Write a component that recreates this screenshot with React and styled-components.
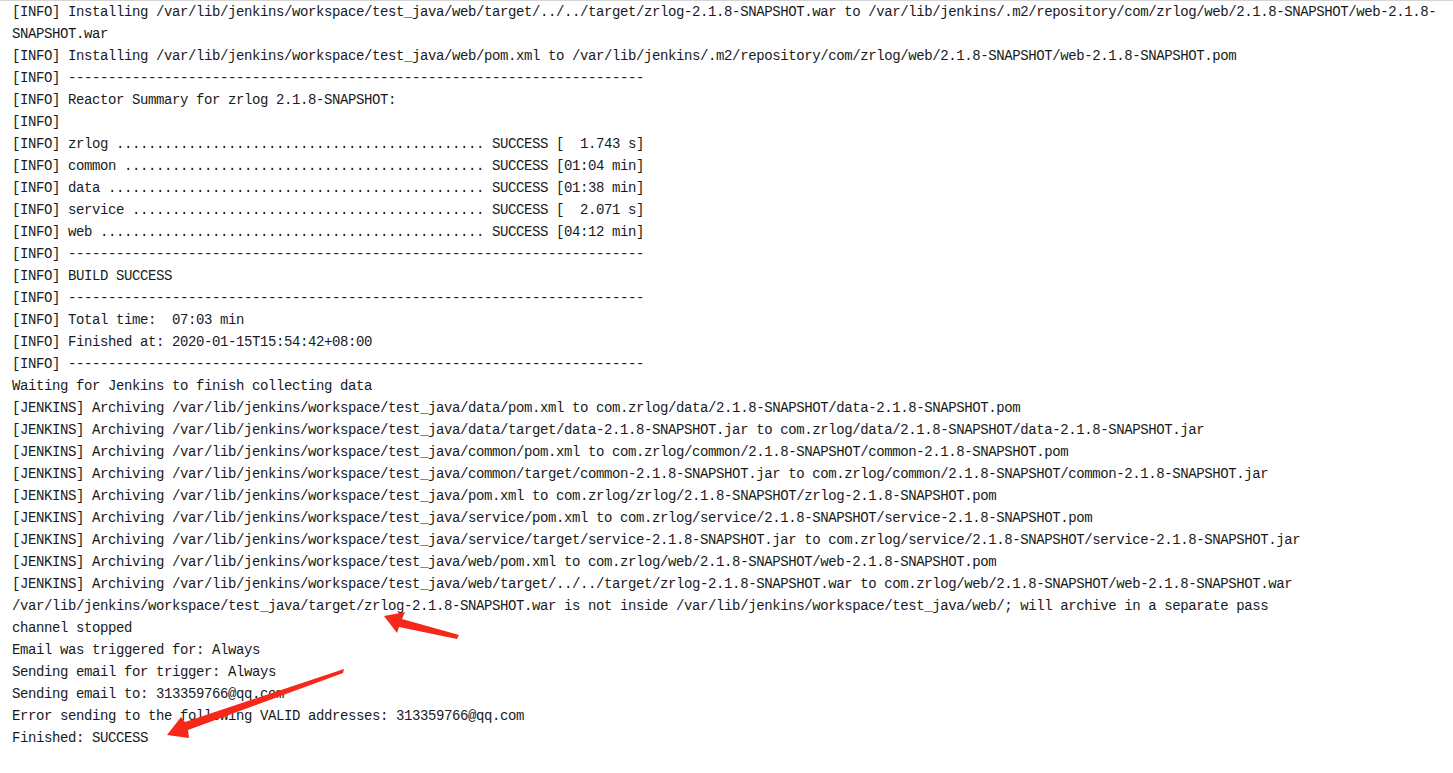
import React from 'react'
import styled, { createGlobalStyle } from 'styled-components'

const GlobalStyle = createGlobalStyle`
  html, body {
    margin: 0;
    padding: 0;
    background: #ffffff;
  }
`;

const Page = styled.div`
  position: relative;
  width: 1453px;
  height: 773px;
  overflow: hidden;
  background: #ffffff;
  border-top: 1px solid #d4d4d4;
  box-sizing: border-box;
`;

const Console = styled.pre`
  margin: 0;
  padding: 0 0 0 12px;
  font-family: "Liberation Mono", "DejaVu Sans Mono", monospace;
  font-size: 14px;
  letter-spacing: -0.4px;
  line-height: 22px;
  color: #1a1a1a;
  white-space: pre;
`;

const Line = styled.div`
  height: 22px;
`;

const Annotations = styled.svg`
  position: absolute;
  left: 0;
  top: 0;
  pointer-events: none;
`;

const dashes = '-'.repeat(72);
const dots = (n) => '.'.repeat(n);

const lines = [
  '[INFO] Installing /var/lib/jenkins/workspace/test_java/web/target/../../target/zrlog-2.1.8-SNAPSHOT.war to /var/lib/jenkins/.m2/repository/com/zrlog/web/2.1.8-SNAPSHOT/web-2.1.8-',
  'SNAPSHOT.war',
  '[INFO] Installing /var/lib/jenkins/workspace/test_java/web/pom.xml to /var/lib/jenkins/.m2/repository/com/zrlog/web/2.1.8-SNAPSHOT/web-2.1.8-SNAPSHOT.pom',
  `[INFO] ${dashes}`,
  '[INFO] Reactor Summary for zrlog 2.1.8-SNAPSHOT:',
  '[INFO]',
  `[INFO] zrlog ${dots(46)} SUCCESS [  1.743 s]`,
  `[INFO] common ${dots(45)} SUCCESS [01:04 min]`,
  `[INFO] data ${dots(47)} SUCCESS [01:38 min]`,
  `[INFO] service ${dots(44)} SUCCESS [  2.071 s]`,
  `[INFO] web ${dots(48)} SUCCESS [04:12 min]`,
  `[INFO] ${dashes}`,
  '[INFO] BUILD SUCCESS',
  `[INFO] ${dashes}`,
  '[INFO] Total time:  07:03 min',
  '[INFO] Finished at: 2020-01-15T15:54:42+08:00',
  `[INFO] ${dashes}`,
  'Waiting for Jenkins to finish collecting data',
  '[JENKINS] Archiving /var/lib/jenkins/workspace/test_java/data/pom.xml to com.zrlog/data/2.1.8-SNAPSHOT/data-2.1.8-SNAPSHOT.pom',
  '[JENKINS] Archiving /var/lib/jenkins/workspace/test_java/data/target/data-2.1.8-SNAPSHOT.jar to com.zrlog/data/2.1.8-SNAPSHOT/data-2.1.8-SNAPSHOT.jar',
  '[JENKINS] Archiving /var/lib/jenkins/workspace/test_java/common/pom.xml to com.zrlog/common/2.1.8-SNAPSHOT/common-2.1.8-SNAPSHOT.pom',
  '[JENKINS] Archiving /var/lib/jenkins/workspace/test_java/common/target/common-2.1.8-SNAPSHOT.jar to com.zrlog/common/2.1.8-SNAPSHOT/common-2.1.8-SNAPSHOT.jar',
  '[JENKINS] Archiving /var/lib/jenkins/workspace/test_java/pom.xml to com.zrlog/zrlog/2.1.8-SNAPSHOT/zrlog-2.1.8-SNAPSHOT.pom',
  '[JENKINS] Archiving /var/lib/jenkins/workspace/test_java/service/pom.xml to com.zrlog/service/2.1.8-SNAPSHOT/service-2.1.8-SNAPSHOT.pom',
  '[JENKINS] Archiving /var/lib/jenkins/workspace/test_java/service/target/service-2.1.8-SNAPSHOT.jar to com.zrlog/service/2.1.8-SNAPSHOT/service-2.1.8-SNAPSHOT.jar',
  '[JENKINS] Archiving /var/lib/jenkins/workspace/test_java/web/pom.xml to com.zrlog/web/2.1.8-SNAPSHOT/web-2.1.8-SNAPSHOT.pom',
  '[JENKINS] Archiving /var/lib/jenkins/workspace/test_java/web/target/../../target/zrlog-2.1.8-SNAPSHOT.war to com.zrlog/web/2.1.8-SNAPSHOT/web-2.1.8-SNAPSHOT.war',
  '/var/lib/jenkins/workspace/test_java/target/zrlog-2.1.8-SNAPSHOT.war is not inside /var/lib/jenkins/workspace/test_java/web/; will archive in a separate pass',
  'channel stopped',
  'Email was triggered for: Always',
  'Sending email for trigger: Always',
  'Sending email to: 313359766@qq.com',
  'Error sending to the following VALID addresses: 313359766@qq.com',
  'Finished: SUCCESS',
];

export default function App() {
  return (
    <Page>
      <GlobalStyle />
      <Console>
        {lines.map((text, i) => (
          <Line key={i}>{text}</Line>
        ))}
      </Console>
      <Annotations width="1453" height="773" viewBox="0 0 1453 773">
        {/* arrow pointing at zrlog-2.1.8 */}
        <polygon
          fill="#f5281a"
          points="384,615 405,611 402,618 459,634 457,638 399,626 397,632"
        />
        {/* arrow pointing at Finished */}
        <polygon
          fill="#f5281a"
          points="167,734 181,716 185,721 344,668 343,672 188,729 189,737"
        />
      </Annotations>
    </Page>
  )
}
